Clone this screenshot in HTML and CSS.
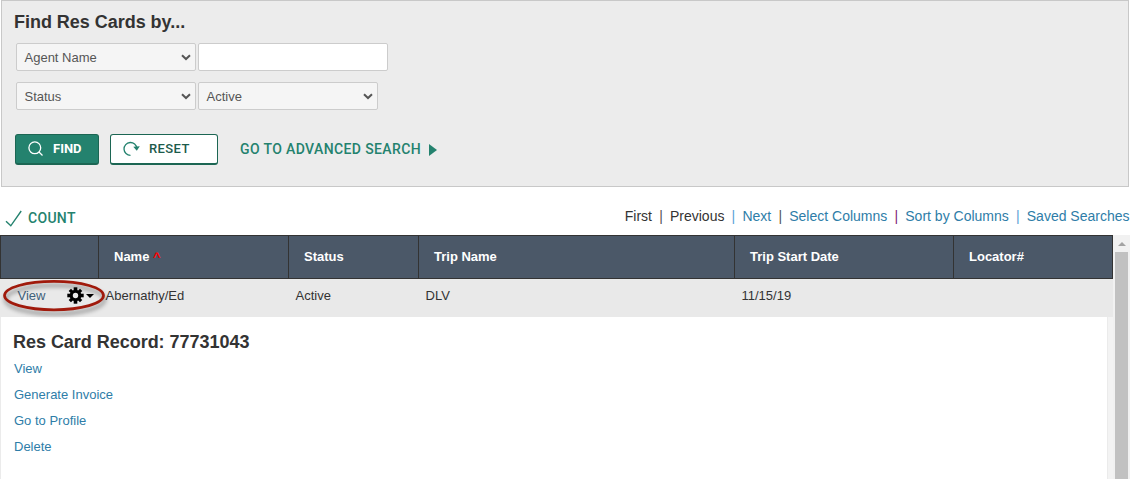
FILE: index.html
```html
<!DOCTYPE html>
<html lang="en">
<head>
<meta charset="utf-8">
<title>Res Cards</title>
<link rel="stylesheet" href="styles.css">
</head>
<body>
<section class="search">
  <h2 class="title">Find Res Cards by...</h2>
  <div class="fields">
    <div class="select"><span>Agent Name</span><svg class="chev" viewBox="0 0 10 7"><path d="M1 1.2 5 5 9 1.2"/></svg></div>
    <input class="input" type="text" aria-label="Agent Name">
  </div>
  <div class="fields">
    <div class="select"><span>Status</span><svg class="chev" viewBox="0 0 10 7"><path d="M1 1.2 5 5 9 1.2"/></svg></div>
    <div class="select"><span>Active</span><svg class="chev" viewBox="0 0 10 7"><path d="M1 1.2 5 5 9 1.2"/></svg></div>
  </div>
  <div class="actions">
    <button class="btn find"><svg width="16" height="16" viewBox="0 0 16 16"><circle cx="6.8" cy="6.8" r="5.9"/><path d="M11 11 14.5 14.5"/></svg><span>FIND</span></button>
    <button class="btn reset"><svg width="17" height="16" viewBox="0 0 17 16"><path d="M7.5 14.3A6.4 6.4 0 1 1 13.8 7.4"/><path class="fill" d="M10.3 5.8 16.8 5.2 13.8 9.8Z"/></svg><span>RESET</span></button>
    <a class="advanced"><span>GO TO ADVANCED SEARCH</span><i class="tri"></i></a>
  </div>
</section>
<div class="toolbar">
  <a class="count"><svg width="18" height="18" viewBox="0 0 18 18"><path d="M1 12.2 5.8 16.8 16.2 2"/></svg><span>COUNT</span></a>
  <nav class="pager"><span>First</span><i>|</i><span>Previous</span><i class="blue">|</i><a>Next</a><i>|</i><a>Select Columns</a><i class="purple">|</i><a>Sort by Columns</a><i class="blue">|</i><a>Saved Searches</a></nav>
</div>
<div class="results">
  <div class="grid">
    <div class="row head"><div></div><div>Name <b class="asc">^</b></div><div>Status</div><div>Trip Name</div><div>Trip Start Date</div><div>Locator#</div></div>
    <div class="row record">
      <div class="tools"><span class="view">View</span>
        <svg class="gear" width="17" height="17" viewBox="-8.5 -8.5 17 17"><g><rect x="-1.8" y="-8.2" width="3.6" height="16.4"/><rect x="-1.6" y="-8" width="3.2" height="16" transform="rotate(45)"/><rect x="-1.8" y="-8.2" width="3.6" height="16.4" transform="rotate(90)"/><rect x="-1.6" y="-8" width="3.2" height="16" transform="rotate(135)"/><circle r="5.8"/></g><circle r="2.7" class="hole"/></svg>
        <i class="caret"></i>
        <svg class="mark" width="112" height="42" viewBox="0 0 112 42"><ellipse cx="54" cy="16.6" rx="49.5" ry="14.2"/></svg>
      </div>
      <div>Abernathy/Ed</div><div>Active</div><div>DLV</div><div>11/15/19</div><div></div>
    </div>
    <div class="detail">
      <div class="panel">
        <h2 class="title">Res Card Record: 77731043</h2>
        <a>View</a><a>Generate Invoice</a><a>Go to Profile</a><a>Delete</a>
      </div>
    </div>
  </div>
  <div class="scroll"><i class="up"></i><div class="thumb"></div></div>
</div>
</body>
</html>
```
FILE: styles.css
```css
* { box-sizing: border-box; }
body { margin: 0; height: 479px; overflow: hidden; display: flex; flex-direction: column; background: #fff; color: #333; font: 13px/16px "Liberation Sans", Arial, sans-serif; }
i { font-style: normal; }
svg { display: block; flex: none; fill: none; }
.title { margin: 0; font-size: 18px; line-height: 22px; font-weight: bold; color: #333; white-space: nowrap; letter-spacing: -.03px; }
.search { height: 187px; flex: none; margin: 0 1px; padding: 10px 0 0 12px; border: 1px solid #c8c8c8; background: #ececec; }
.fields { display: flex; gap: 2px; margin: 0 0 11px 2px; height: 28px; }
.search .title { margin-bottom: 10px; }
.select, .input { height: 28px; border: 1px solid #ccc; border-radius: 2px; }
.select { width: 180px; display: flex; align-items: center; justify-content: space-between; padding: 0 4px 0 7.5px; background: #f5f5f5; color: #555; font-size: 13px; }
.select span { padding-top: 2px; }
.chev { width: 10px; height: 7px; stroke: #555; stroke-width: 2; }
.input { width: 190px; background: #fff; padding: 0 8px; }
.actions { display: flex; margin: 24px 0 0 1px; height: 31px; }
.btn { height: 31px; border: 1px solid #1c6653; border-bottom-width: 2px; border-radius: 3px; display: flex; align-items: center; padding: 0; font: 500 13px/16px Roboto, sans-serif; letter-spacing: .4px; }
.btn svg { stroke-width: 1.3; }
.find { width: 84px; background: #24826e; color: #fff; padding-left: 12px; gap: 9px; }
.find span { font-weight: bold; letter-spacing: 0; }
.find svg { stroke: #fff; }
.reset { width: 108px; margin-left: 11px; background: #fff; color: #1d5b4b; padding-left: 12px; gap: 9px; }
.reset svg { stroke: #24826e; }
.reset .fill { fill: #24826e; stroke: none; }
.advanced { display: flex; margin-left: 22px; padding-top: 6px; color: #24826e; font: 500 14px/18px Roboto, sans-serif; letter-spacing: .38px; white-space: nowrap; }
.tri { margin: 4px 0 0 8px; width: 0; height: 0; border: 6px solid transparent; border-left: 8px solid #24826e; border-right: 0; }
.toolbar { height: 48px; flex: none; display: flex; justify-content: space-between; padding: 22px 0 0 5px; }
.count { display: flex; gap: 5px; color: #24826e; font: 500 14px/19px Roboto, sans-serif; letter-spacing: .3px; }
.count svg { stroke: #24826e; stroke-width: 1.4; }
.pager { display: flex; font-size: 14px; line-height: 16px; white-space: nowrap; margin: -1px .5px 0 0; }
.pager a, .panel a { color: #2e7da8; }
.pager i { width: 18px; text-align: center; color: #555; }
.pager .blue { color: #5c9fd6; }
.pager .purple { color: #80267a; }
.results { display: flex; flex: 1; min-height: 0; }
.grid { width: 1113px; display: flex; flex-direction: column; }
.row { display: grid; grid-template-columns: 98px 190px 130px 316px 219px 160px; flex: none; }
.head { height: 44px; background: #333; border: 1px solid #333; border-right: 0; grid-template-columns: 98px 190px 130px 316px 219px 159px; color: #fff; font-weight: bold; }
.head > div { padding: 13px 0 0 15px; background: #4b5868; border-right: 1px solid #333; }
.head .asc { color: #f00; }
.record { height: 38px; background: #e9e9e9; }
.record > div { padding: 9px 0 0 7.5px; }
.record .tools { position: relative; display: flex; padding: 8px 0 0 17.5px; }
.view { color: #40607a; width: 49.5px; padding-top: 1px; }
.gear g { fill: #000; }
.hole { fill: #e9e9e9; }
.caret { margin: 7px 0 0 2px; width: 0; height: 0; border: 4px solid transparent; border-top-color: #000; border-bottom: 0; }
.mark { position: absolute; left: 0; top: 0; stroke: #a01a0c; stroke-width: 2.7; filter: drop-shadow(1px 4px 2px rgba(0,0,0,.4)); z-index: 1; }
.detail { flex: 1; background: #f3f3f3; padding-right: 5px; display: flex; }
.panel { flex: 1; background: #fff; border-left: 1px solid #ebebeb; border-right: 1px solid #ebebeb; padding: 14px 12px; display: flex; flex-direction: column; }
.panel a { line-height: 26px; padding-left: 1px; }
.panel .title { margin-bottom: 3px; }
.scroll { width: 17px; background: #f1f1f1; padding: 7px 2px 0; display: flex; flex-direction: column; }
.up { align-self: center; width: 0; height: 0; border: 4px solid transparent; border-top: 0; border-bottom-color: #a3a3a3; margin-bottom: 6px; }
.thumb { flex: 1; background: #c1c1c1; }
```
